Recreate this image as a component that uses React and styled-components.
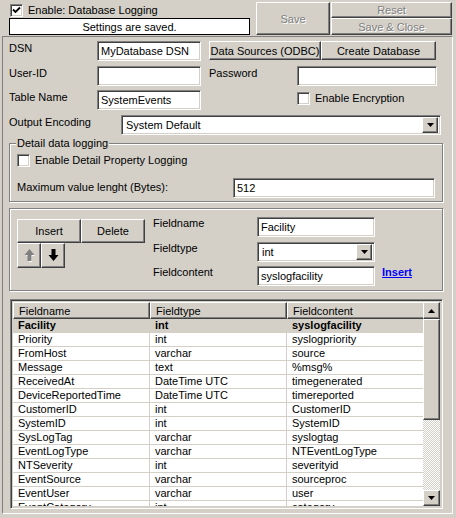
import styled, { createGlobalStyle, css } from "styled-components";

// GLOBAL
const GlobalStyle = createGlobalStyle`
  html, body {
    margin: 0;
    padding: 0;
    background: #d4d0c8;
  }
  body {
    font-family: "Liberation Sans", Arial, sans-serif;
    font-size: 11px;
    color: #000;
  }
  * { box-sizing: border-box; }
`;

// SHARED 3D EDGES
const raised = css`
  background: #d4d0c8;
  border: 1px solid;
  border-color: #fff #404040 #404040 #fff;
  box-shadow: inset -1px -1px #808080;
`;

const sunken = css`
  background: #fff;
  border: 1px solid;
  border-color: #808080 #fff #fff #808080;
  box-shadow: inset 1px 1px #404040, inset -1px -1px #d4d0c8;
`;

// LAYOUT
const Window = styled.div`
  width: 456px;
  height: 518px;
  display: flex;
  flex-direction: column;
  background: #d4d0c8;
  overflow: hidden;
`;

const TopBar = styled.div`
  height: 36px;
  display: flex;
  padding: 2px 0 0 9px;
  gap: 6px;
`;

const TopLeft = styled.div`
  width: 241px;
  display: flex;
  flex-direction: column;
`;

const CheckRow = styled.label`
  display: flex;
  align-items: center;
  gap: 5px;
  height: 16px;
  margin-left: ${(p) => p.$indent || 0}px;
`;

const StatusBox = styled.div`
  height: 17px;
  border: 1px solid #000;
  background: #fff;
  display: flex;
  align-items: center;
  justify-content: center;
`;

const TopButtons = styled.div`
  display: flex;
  gap: 1px;
`;

const StackCol = styled.div`
  display: flex;
  flex-direction: column;
`;

const Button = styled.button`
  ${raised};
  font: inherit;
  color: ${(p) => (p.disabled ? "#808080" : "#000")};
  text-shadow: ${(p) => (p.disabled ? "1px 1px #fff" : "none")};
  width: ${(p) => p.$w}px;
  height: ${(p) => p.$h}px;
  padding: 0;
  display: flex;
  align-items: center;
  justify-content: center;
`;

const Main = styled.div`
  flex: 1;
  margin: 0 3px 4px 2px;
  border: 1px solid;
  border-color: #808080 #fff #fff #808080;
  padding: 4px 0 0 6px;
  display: flex;
  flex-direction: column;
`;

const Row = styled.div`
  display: flex;
  align-items: flex-start;
  margin-top: ${(p) => p.$mt || 0}px;
`;

const Label = styled.span`
  width: ${(p) => p.$w}px;
  flex-shrink: 0;
  padding-top: ${(p) => (p.$pt === undefined ? 1 : p.$pt)}px;
  line-height: 13px;
`;

const Input = styled.div`
  ${sunken};
  width: ${(p) => p.$w}px;
  height: ${(p) => p.$h || 20}px;
  flex-shrink: 0;
  padding: 0 3px;
  display: flex;
  align-items: center;
  white-space: nowrap;
`;

const Spacer = styled.div`
  width: ${(p) => p.$w}px;
  flex-shrink: 0;
`;

const SelectBox = styled.div`
  ${sunken};
  width: ${(p) => p.$w}px;
  height: 20px;
  flex-shrink: 0;
  display: flex;
  align-items: center;
  padding: 2px 2px 2px 4px;
`;

const SelectText = styled.span`
  flex: 1;
`;

const DropButton = styled.div`
  ${raised};
  width: 16px;
  height: 16px;
  display: flex;
  align-items: center;
  justify-content: center;
`;

const Box = styled.span`
  ${sunken};
  width: 13px;
  height: 13px;
  flex-shrink: 0;
  display: flex;
  align-items: center;
  justify-content: center;
`;

const Group = styled.fieldset`
  margin: ${(p) => p.$mt}px 0 0 0;
  width: 434px;
  padding: ${(p) => p.$pad};
  border: 1px solid #808080;
  box-shadow: inset 1px 1px #fff, 1px 1px #fff;
  min-width: 0;
`;

const Legend = styled.legend`
  padding: 0 1px;
  margin-left: -1px;
  background: #d4d0c8;
  line-height: 13px;
`;

const FieldArea = styled.div`
  display: flex;
  gap: 8px;
`;

const ButtonColumn = styled.div`
  width: 128px;
  padding-top: 2px;
  display: flex;
  flex-direction: column;
`;

const ButtonRow = styled.div`
  display: flex;
`;

const FieldGrid = styled.div`
  display: grid;
  grid-template-columns: 104px 118px auto;
  grid-template-rows: 20px 19px 19px;
  row-gap: 5px;
  align-items: start;
`;

const LinkText = styled.a`
  color: #0000ff;
  font-weight: bold;
  text-decoration: underline;
  margin-left: 7px;
  padding-top: 0;
  line-height: 13px;
  cursor: pointer;
`;

// TABLE
const Table = styled.div`
  margin: 8px 0 0 1px;
  width: 433px;
  height: 210px;
  border: 1px solid;
  border-color: #808080 #fff #fff #808080;
  box-shadow: inset 1px 1px #404040, inset -1px -1px #d4d0c8;
  padding: 2px;
  display: flex;
  background: #d4d0c8;
`;

const GridArea = styled.div`
  width: 412px;
  overflow: hidden;
  display: flex;
  flex-direction: column;
`;

const Columns = "137px 137px 138px";

const HeaderRow = styled.div`
  display: grid;
  grid-template-columns: ${Columns};
  height: 17px;
  flex-shrink: 0;
`;

const HeaderCell = styled.div`
  ${raised};
  padding-left: 5px;
  display: flex;
  align-items: center;
`;

const DataRow = styled.div`
  display: grid;
  grid-template-columns: ${Columns};
  height: 14px;
  flex-shrink: 0;
  background: ${(p) => (p.$selected ? "#d4d0c8" : "#fff")};
  font-weight: ${(p) => (p.$selected ? "bold" : "normal")};
`;

const Cell = styled.div`
  padding-left: 5px;
  border-right: 1px solid #d4d0c8;
  border-bottom: 1px solid #d4d0c8;
  line-height: 13px;
  white-space: nowrap;
  overflow: hidden;
`;

const Scrollbar = styled.div`
  width: 17px;
  display: flex;
  flex-direction: column;
`;

const ScrollButton = styled.div`
  ${raised};
  height: ${(p) => p.$h}px;
  flex-shrink: 0;
  display: flex;
  align-items: center;
  justify-content: center;
`;

const Thumb = styled.div`
  ${raised};
  height: 101px;
  flex-shrink: 0;
`;

const Track = styled.div`
  flex: 1;
  background: repeating-conic-gradient(#fff 0 25%, #d4d0c8 0 50%) 0 0 / 2px 2px;
`;

// ICONS
const Check = () => (
  <svg width="9" height="9" viewBox="0 0 9 9">
    <path d="M1 3.5 L3.5 6 L8 1.5" fill="none" stroke="#000" strokeWidth="1.8" />
  </svg>
);

const Tri = ({ up }) => (
  <svg width="7" height="4" viewBox="0 0 7 4">
    <path d={up ? "M0 4 L3.5 0 L7 4 Z" : "M0 0 L7 0 L3.5 4 Z"} fill="#000" />
  </svg>
);

const Arrow = ({ up, color }) => (
  <svg width="11" height="13" viewBox="0 0 11 13">
    {up ? (
      <>
        <path d="M6 1 L11 7 H8 V13 H5 V7 H2 Z" fill="#fff" />
        <path d="M5.5 0 L10.5 6 H7.5 V12 H3.5 V6 H0.5 Z" fill={color} />
      </>
    ) : (
      <path d="M3.5 0 H7.5 V6 H10.5 L5.5 12 L0.5 6 H3.5 Z" fill={color} />
    )}
  </svg>
);

const CheckBox = ({ checked }) => <Box>{checked && <Check />}</Box>;

const Select = ({ w, value }) => (
  <SelectBox $w={w}>
    <SelectText>{value}</SelectText>
    <DropButton>
      <Tri />
    </DropButton>
  </SelectBox>
);

// DATA
const rows = [
  ["Facility", "int", "syslogfacility"],
  ["Priority", "int", "syslogpriority"],
  ["FromHost", "varchar", "source"],
  ["Message", "text", "%msg%"],
  ["ReceivedAt", "DateTime UTC", "timegenerated"],
  ["DeviceReportedTime", "DateTime UTC", "timereported"],
  ["CustomerID", "int", "CustomerID"],
  ["SystemID", "int", "SystemID"],
  ["SysLogTag", "varchar", "syslogtag"],
  ["EventLogType", "varchar", "NTEventLogType"],
  ["NTSeverity", "int", "severityid"],
  ["EventSource", "varchar", "sourceproc"],
  ["EventUser", "varchar", "user"],
  ["EventCategory", "int", "category"],
];

export default function App() {
  return (
    <>
      <GlobalStyle />
      <Window>
        <TopBar>
          <TopLeft>
            <CheckRow $indent={1}>
              <CheckBox checked />
              Enable: Database Logging
            </CheckRow>
            <StatusBox>Settings are saved.</StatusBox>
          </TopLeft>
          <TopButtons>
            <Button disabled $w={74} $h={33}>Save</Button>
            <StackCol>
              <Button disabled $w={121} $h={16}>Reset</Button>
              <Button disabled $w={121} $h={17}>Save &amp; Close</Button>
            </StackCol>
          </TopButtons>
        </TopBar>

        <Main>
          <Row>
            <Label $w={88}>DSN</Label>
            <Input $w={104} $h={20}>MyDatabase DSN</Input>
            <Spacer $w={8} />
            <Button $w={112} $h={19}>Data Sources (ODBC)</Button>
            <Button $w={115} $h={19}>Create Database</Button>
          </Row>
          <Row $mt={5}>
            <Label $w={88}>User-ID</Label>
            <Input $w={104} />
            <Spacer $w={8} />
            <Label $w={88}>Password</Label>
            <Input $w={140} />
          </Row>
          <Row $mt={4}>
            <Label $w={88}>Table Name</Label>
            <Input $w={104}>SystemEvents</Input>
            <Spacer $w={96} />
            <CheckRow>
              <CheckBox />
              Enable Encryption
            </CheckRow>
          </Row>
          <Row $mt={5}>
            <Label $w={112}>Output Encoding</Label>
            <Select w={320} value="System Default" />
          </Row>

          <Group $mt={2} $pad="2px 7px 3px 7px">
            <Legend>Detail data logging</Legend>
            <CheckRow>
              <CheckBox />
              Enable Detail Property Logging
            </CheckRow>
            <Row $mt={10}>
              <Label $w={216} $pt={3}>Maximum value lenght (Bytes):</Label>
              <Input $w={202}>512</Input>
            </Row>
          </Group>

          <Group $mt={6} $pad="8px 7px 5px 7px">
            <FieldArea>
              <ButtonColumn>
                <ButtonRow>
                  <Button $w={64} $h={24}>Insert</Button>
                  <Button $w={64} $h={24}>Delete</Button>
                </ButtonRow>
                <ButtonRow>
                  <Button $w={24} $h={25}>
                    <Arrow up color="#808080" />
                  </Button>
                  <Button $w={24} $h={25}>
                    <Arrow color="#000" />
                  </Button>
                </ButtonRow>
              </ButtonColumn>
              <FieldGrid>
                <Label $w={104} $pt={0}>Fieldname</Label>
                <Input $w={118}>Facility</Input>
                <span />
                <Label $w={104} $pt={0}>Fieldtype</Label>
                <Select w={118} value="int" />
                <span />
                <Label $w={104} $pt={0}>Fieldcontent</Label>
                <Input $w={118}>syslogfacility</Input>
                <LinkText>Insert</LinkText>
              </FieldGrid>
            </FieldArea>
          </Group>

          <Table>
            <GridArea>
              <HeaderRow>
                <HeaderCell>Fieldname</HeaderCell>
                <HeaderCell>Fieldtype</HeaderCell>
                <HeaderCell>Fieldcontent</HeaderCell>
              </HeaderRow>
              {rows.map((r, i) => (
                <DataRow key={r[0]} $selected={i === 0}>
                  {r.map((c, j) => (
                    <Cell key={j}>{c}</Cell>
                  ))}
                </DataRow>
              ))}
            </GridArea>
            <Scrollbar>
              <ScrollButton $h={17}>
                <Tri up />
              </ScrollButton>
              <Thumb />
              <Track />
              <ScrollButton $h={16}>
                <Tri />
              </ScrollButton>
            </Scrollbar>
          </Table>
        </Main>
      </Window>
    </>
  );
}
